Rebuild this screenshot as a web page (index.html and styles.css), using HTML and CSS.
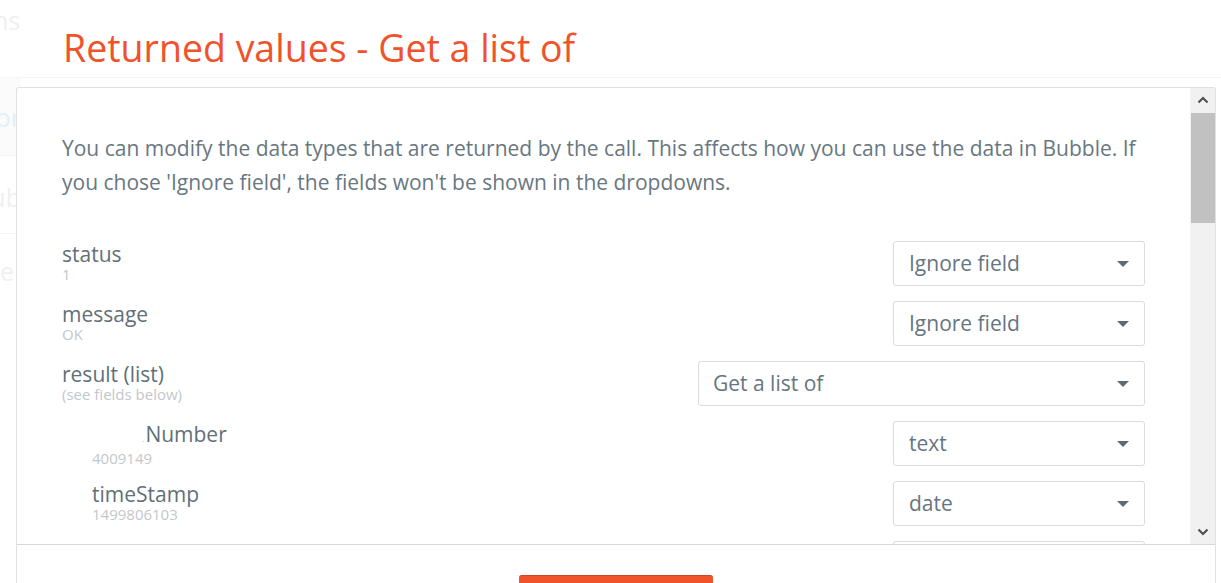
FILE: index.html
```html
<!DOCTYPE html>
<html>
<head>
<meta charset="utf-8">
<link rel="stylesheet" href="styles.css">
</head>
<body>
<div class="bg">
  <div class="bg-head"><span class="bg-ns">ns</span></div>
  <div class="bg-item bg-active"><span>or</span></div>
  <div class="bg-item"><span>ub</span></div>
  <div class="bg-item bg-last"><span>e</span></div>
</div>
<div class="modal">
  <h1 class="title">Returned values - Get a list of</h1>
  <div class="panel">
    <div class="scroll">
      <div class="content">
        <p class="intro">You can modify the data types that are returned by the call. This affects how you can use the data in Bubble. If you chose 'Ignore field', the fields won't be shown in the dropdowns.</p>
        <div class="row">
          <div class="field"><div class="label">status</div><div class="sub">1</div></div>
          <div class="select"><span>Ignore field</span><i class="caret"></i></div>
        </div>
        <div class="row">
          <div class="field"><div class="label">message</div><div class="sub">OK</div></div>
          <div class="select"><span>Ignore field</span><i class="caret"></i></div>
        </div>
        <div class="row">
          <div class="field"><div class="label">result (list)</div><div class="sub">(see fields below)</div></div>
          <div class="select select-wide"><span>Get a list of</span><i class="caret"></i></div>
        </div>
        <div class="row row-nested">
          <div class="field"><div class="label label-num"><span class="dot">.</span>Number</div><div class="sub">4009149</div></div>
          <div class="select"><span>text</span><i class="caret"></i></div>
        </div>
        <div class="row row-nested">
          <div class="field"><div class="label">timeStamp</div><div class="sub">1499806103</div></div>
          <div class="select"><span>date</span><i class="caret"></i></div>
        </div>
        <div class="row row-nested">
          <div class="field"><div class="label">symbol</div><div class="sub">BTC</div></div>
          <div class="select"><span>text</span><i class="caret"></i></div>
        </div>
      </div>
      <div class="scrollbar">
        <div class="sb-btn">
          <svg width="12" height="8" viewBox="0 0 12 8"><path d="M1.5 6.5 L6 2 L10.5 6.5" fill="none" stroke="#505050" stroke-width="2.2"/></svg>
        </div>
        <div class="sb-track"><div class="sb-thumb"></div></div>
        <div class="sb-btn">
          <svg width="12" height="8" viewBox="0 0 12 8"><path d="M1.5 1.5 L6 6 L10.5 1.5" fill="none" stroke="#505050" stroke-width="2.2"/></svg>
        </div>
      </div>
    </div>
    <div class="footer">
      <button class="btn">Save</button>
    </div>
  </div>
</div>
</body>
</html>
```
FILE: styles.css
```css
* { box-sizing: border-box; }
html, body { margin: 0; padding: 0; }
body {
  width: 1221px;
  height: 583px;
  overflow: hidden;
  position: relative;
  background: #ffffff;
  font-family: "Open Sans", "Liberation Sans", sans-serif;
}

/* faint page behind the modal */
.bg {
  width: 21px;
  font-size: 25px;
  color: #eef0f2;
}
.bg-head, .bg-item {
  white-space: nowrap;
  display: flex;
  justify-content: flex-end;
}
.bg-head {
  height: 78px;
  padding-top: 3px;
  border-bottom: 1px solid #f4f5f6;
  width: 1221px;
  justify-content: flex-start;
}
.bg-ns { margin-left: -7px; }
.bg-item {
  height: 78px;
  padding-top: 24px;
  border-bottom: 1px solid #f4f5f6;
}
.bg-active {
  background: #fbfbfb;
  color: #e2f1f9;
  padding-top: 22px;
}
.bg-last { border-bottom: none; padding-top: 20px; justify-content: flex-start; }

/* modal */
.modal {
  position: absolute;
  top: 0; left: 0; right: 0; bottom: 0;
  padding: 0 5px 0 16px;
}
.title {
  margin: 0 0 0 47px;
  padding-top: 26px;
  height: 87px;
  font-weight: 400;
  font-size: 37.5px;
  line-height: 43px;
  color: #f0522b;
  white-space: nowrap;
}
.panel {
  background: #fff;
  border: 1px solid #dde2e7;
  border-bottom: none;
  border-radius: 3px 3px 0 0;
  height: 496px;
  overflow: hidden;
}
.scroll {
  display: flex;
  height: 456px;
  overflow: hidden;
}
.content {
  flex: 1;
  padding: 43px 45px 0 45px;
  color: #65747e;
}
.intro {
  margin: 0 0 42px 0;
  font-size: 21px;
  line-height: 34px;
  color: #687780;
}
.row {
  display: flex;
  justify-content: space-between;
  align-items: flex-start;
  height: 60px;
}
.field { padding-top: 3px; white-space: nowrap; }
.label {
  font-size: 21px;
  line-height: 21px;
  color: #626f78;
}
.sub {
  font-size: 15px;
  line-height: 18px;
  color: #c4c7ca;
}
.row-nested .field { padding-left: 30px; }
.label-num { padding-left: 50px; }
.dot {
  font-size: 9px;
  color: #b9bec2;
  margin-right: 1px;
}
.select {
  width: 252px;
  height: 45px;
  border: 1px solid #dcdcdc;
  border-radius: 3px;
  display: flex;
  align-items: center;
  justify-content: space-between;
  padding: 0 15px 0 15px;
  font-size: 21px;
  line-height: 43px;
  color: #66757f;
  background: #fff;
}
.select-wide { width: 447px; padding-left: 14px; }
.caret {
  display: block;
  width: 0; height: 0;
  border-left: 6.5px solid transparent;
  border-right: 6.5px solid transparent;
  border-top: 6px solid #5e6b74;
  margin-top: 1px;
}

/* scrollbar */
.scrollbar {
  width: 25px;
  background: #f1f1f1;
  display: flex;
  flex-direction: column;
}
.sb-btn {
  height: 24px;
  display: flex;
  align-items: center;
  justify-content: center;
}
.sb-track {
  flex: 1;
  padding-left: 1px;
}
.sb-thumb {
  margin-top: 1px;
  height: 110px;
  background: #c1c1c1;
}

/* footer */
.footer {
  border-top: 1px solid #d8d8d8;
  display: flex;
  justify-content: center;
  padding-top: 30px;
}
.btn {
  width: 194px;
  height: 46px;
  background: #f0522a;
  border: none;
  border-top: 1px solid #c9461f;
  border-radius: 3px 3px 0 0;
  color: #fff;
  font-family: "Open Sans", "Liberation Sans", sans-serif;
  font-size: 18px;
}
```
